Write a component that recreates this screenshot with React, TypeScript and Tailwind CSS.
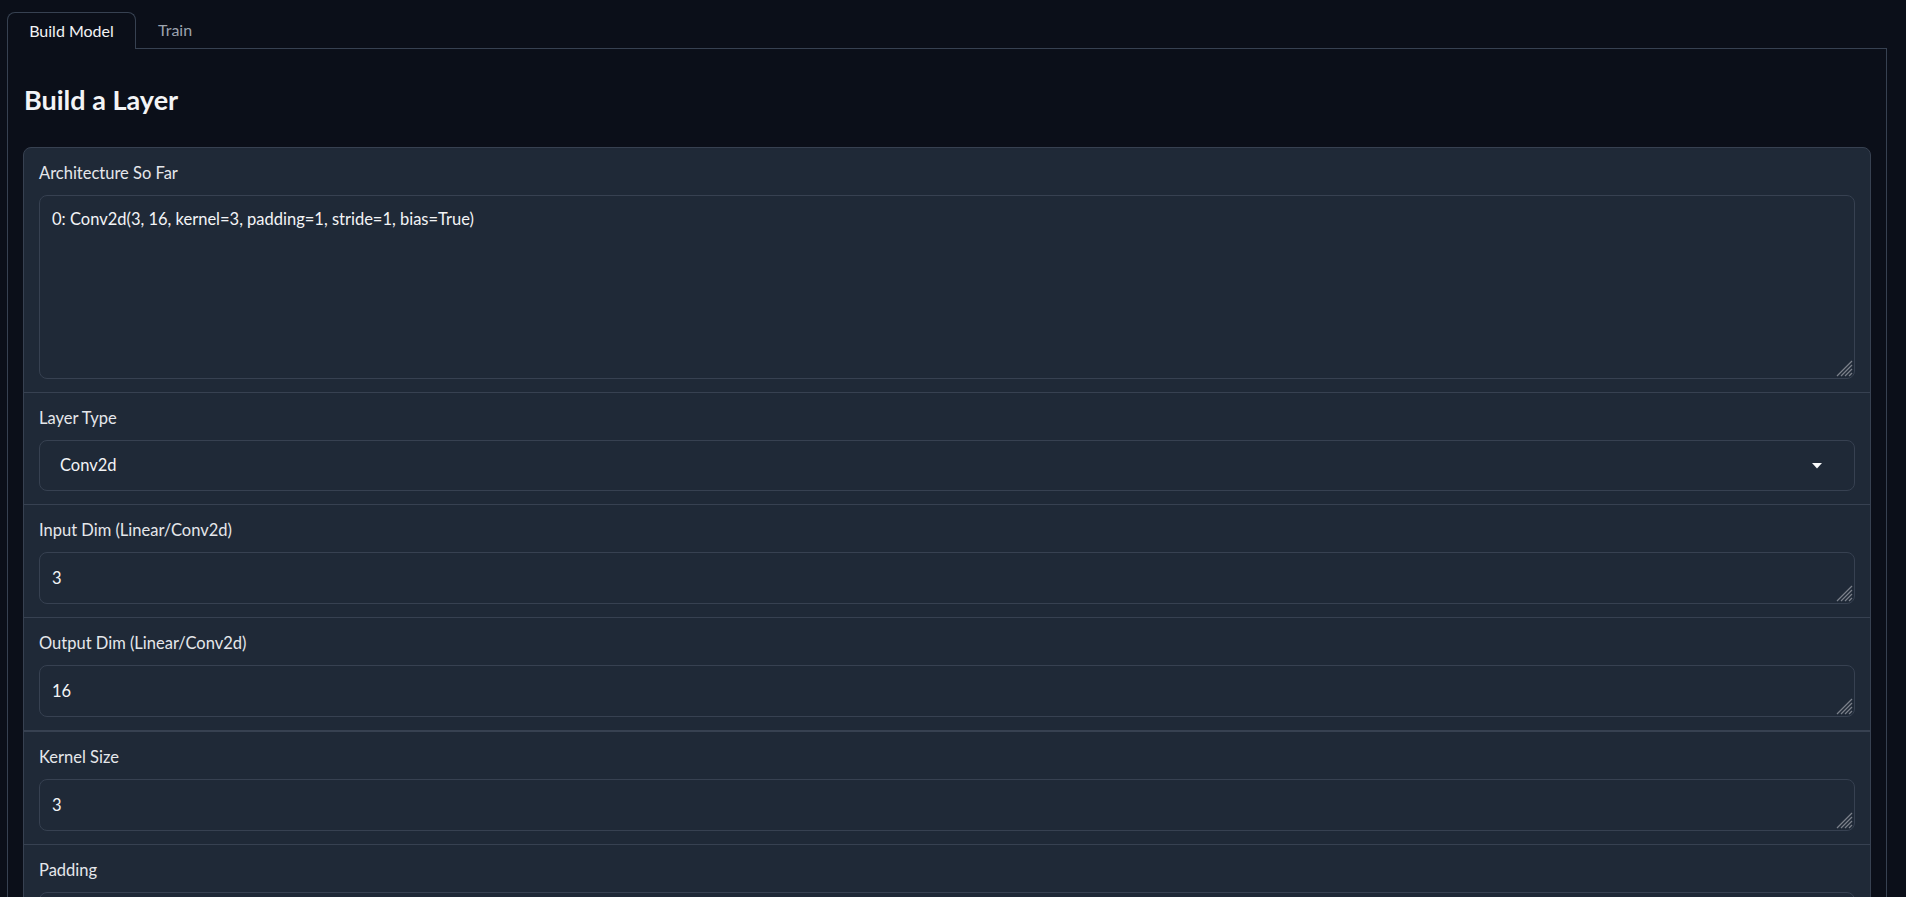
import React from "react";

function Grip() {
  return (
    <svg
      className="absolute right-[1px] bottom-[1px]"
      width="17"
      height="17"
      viewBox="0 0 17 17"
    >
      {[1, 5, 9, 13].map((k) => (
        <line
          key={k}
          x1={16}
          y1={k}
          x2={k}
          y2={16}
          stroke="#7b808a"
          strokeWidth="1.3"
        />
      ))}
    </svg>
  );
}

function Row({
  label,
  children,
  sepBelow = 1,
}: {
  label: string;
  children: React.ReactNode;
  sepBelow?: number;
}) {
  return (
    <div className="flex flex-col">
      <div className="px-[15px] pt-[15px] pb-[13px]">
        <div className="h-5 leading-5 mb-3 text-[#e5e7eb]">{label}</div>
        {children}
      </div>
      {sepBelow === 1 && <div className="h-px bg-[#374151]" />}
      {sepBelow === 2 && <div className="h-[2px] bg-[#374151]" />}
    </div>
  );
}

function InputBox({ value }: { value: string }) {
  return (
    <div className="relative h-[52px] rounded-lg border border-[#374151] bg-[#1f2937] flex items-center px-3 text-[#f3f4f6]">
      {value}
      <Grip />
    </div>
  );
}

export default function App() {
  return (
    <div className="min-h-[897px] w-[1906px] overflow-hidden bg-[#0b0f19] font-[Lato,'Noto_Sans',sans-serif] text-[16.5px] text-[#f3f4f6]">
      <div className="pt-3 pl-[7px]">
        {/* tab bar */}
        <div className="flex w-[1880px] items-end border-b border-[#374151]">
          <div className="relative -mb-px h-[37px] w-[129px] rounded-t-lg border border-b-0 border-[#374151] bg-[#0b0f19] flex items-center justify-center text-[16px] text-[#f3f4f6]">
            Build Model
          </div>
          <div className="h-9 pl-[22px] flex items-center text-[16px] text-[#9ca3af]">Train</div>
        </div>
        {/* panel */}
        <div className="w-[1880px] border-x border-[#374151] px-[15px]">
          <div className="pt-[33px] pb-[29px] pl-px">
            <h2 className="h-9 leading-9 text-[27px] font-bold text-[#f3f4f6]">Build a Layer</h2>
          </div>
          <div className="rounded-lg border border-[#374151] bg-[#1f2937] overflow-hidden">
            <Row label="Architecture So Far">
              <div className="relative h-[184px] rounded-lg border border-[#374151] bg-[#1f2937] px-3 pt-[13px] leading-5 text-[#f3f4f6]">
                0: Conv2d(3, 16, kernel=3, padding=1, stride=1, bias=True)
                <Grip />
              </div>
            </Row>
            <Row label="Layer Type">
              <div className="relative h-[51px] rounded-lg border border-[#374151] bg-[#1f2937] flex items-center pl-5 pr-8 text-[#f3f4f6]">
                <span className="flex-1">Conv2d</span>
                <svg width="10" height="6" viewBox="0 0 10 6">
                  <path d="M0 0 L10 0 L5 5.5 Z" fill="#f9fafb" />
                </svg>
              </div>
            </Row>
            <Row label="Input Dim (Linear/Conv2d)">
              <InputBox value="3" />
            </Row>
            <Row label="Output Dim (Linear/Conv2d)" sepBelow={2}>
              <InputBox value="16" />
            </Row>
            <Row label="Kernel Size">
              <InputBox value="3" />
            </Row>
            <Row label="Padding">
              <InputBox value="" />
            </Row>
          </div>
        </div>
      </div>
    </div>
  );
}
